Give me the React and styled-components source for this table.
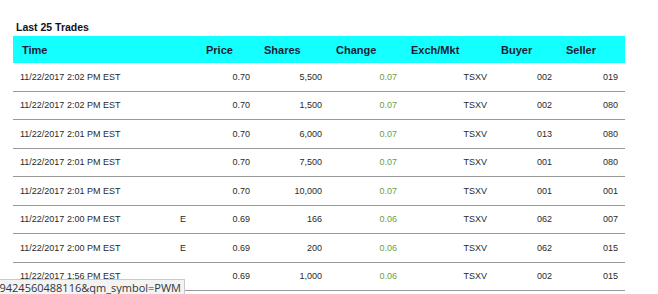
import React from 'react';
import styled, { createGlobalStyle } from 'styled-components';

const trades = [
  { time: '11/22/2017 2:02 PM EST', flag: '', price: '0.70', shares: '5,500', change: '0.07', mkt: 'TSXV', buyer: '002', seller: '019' },
  { time: '11/22/2017 2:02 PM EST', flag: '', price: '0.70', shares: '1,500', change: '0.07', mkt: 'TSXV', buyer: '002', seller: '080' },
  { time: '11/22/2017 2:01 PM EST', flag: '', price: '0.70', shares: '6,000', change: '0.07', mkt: 'TSXV', buyer: '013', seller: '080' },
  { time: '11/22/2017 2:01 PM EST', flag: '', price: '0.70', shares: '7,500', change: '0.07', mkt: 'TSXV', buyer: '001', seller: '080' },
  { time: '11/22/2017 2:01 PM EST', flag: '', price: '0.70', shares: '10,000', change: '0.07', mkt: 'TSXV', buyer: '001', seller: '001' },
  { time: '11/22/2017 2:00 PM EST', flag: 'E', price: '0.69', shares: '166', change: '0.06', mkt: 'TSXV', buyer: '062', seller: '007' },
  { time: '11/22/2017 2:00 PM EST', flag: 'E', price: '0.69', shares: '200', change: '0.06', mkt: 'TSXV', buyer: '062', seller: '015' },
  { time: '11/22/2017 1:56 PM EST', flag: '', price: '0.69', shares: '1,000', change: '0.06', mkt: 'TSXV', buyer: '002', seller: '015' },
];

const columns = [154, 32, 58, 72, 75, 90, 65, 66];

function App() {
  return (
    <Page>
      <GlobalStyle />
      <Title>Last 25 Trades</Title>
      <Table>
        <colgroup>
          {columns.map((w, i) => (
            <col key={i} style={{ width: w }} />
          ))}
        </colgroup>
        <thead>
          <tr>
            <Th>Time</Th>
            <Th />
            <Th>Price</Th>
            <Th>Shares</Th>
            <Th>Change</Th>
            <Th>Exch/Mkt</Th>
            <Th>Buyer</Th>
            <Th>Seller</Th>
          </tr>
        </thead>
        <tbody>
          {trades.map((t, i) => (
            <Row key={i}>
              <Td $align="left">{t.time}</Td>
              <Td $align="center">{t.flag}</Td>
              <Td>{t.price}</Td>
              <Td>{t.shares}</Td>
              <Td $up>{t.change}</Td>
              <Td>{t.mkt}</Td>
              <Td>{t.buyer}</Td>
              <Td>{t.seller}</Td>
            </Row>
          ))}
        </tbody>
      </Table>
      <StatusBubble>
        <span>9424560488116&amp;qm_symbol=PWM</span>
      </StatusBubble>
    </Page>
  );
}

export default App;

const GlobalStyle = createGlobalStyle`
  html, body {
    margin: 0;
    padding: 0;
    background: #ffffff;
  }
  body {
    font-family: "Liberation Sans", Arial, sans-serif;
  }
`;

const Page = styled.div`
  position: relative;
  width: 658px;
  height: 294px;
  overflow: hidden;
  padding: 20px 0 0 13px;
  box-sizing: border-box;
`;

const Title = styled.div`
  margin: 0 0 2px 3px;
  font-size: 10.5px;
  line-height: 14px;
  font-weight: 700;
  color: #111122;
`;

const Table = styled.table`
  width: 612px;
  table-layout: fixed;
  border-collapse: collapse;
`;

const Th = styled.th`
  height: 27px;
  padding: 0 7px;
  background: #14ffff;
  text-align: left;
  font-size: 11px;
  font-weight: 700;
  color: #1c1c33;
  vertical-align: middle;
  &:first-child {
    padding-left: 9px;
  }
`;

const Row = styled.tr`
  border-bottom: 1px solid #999999;
`;

const Td = styled.td`
  height: 27.5px;
  padding: 0 7px;
  font-size: 9px;
  color: ${(p) => (p.$up ? '#6a9e45' : '#2a2a2a')};
  text-align: ${(p) => p.$align || 'right'};
  vertical-align: middle;
  white-space: nowrap;
`;

const StatusBubble = styled.div`
  position: absolute;
  left: 0;
  bottom: 0;
  width: 185px;
  height: 15px;
  display: flex;
  justify-content: flex-end;
  align-items: center;
  overflow: hidden;
  padding-right: 3px;
  box-sizing: border-box;
  background: #f3f3f3;
  border-top: 1px solid #c9c9c9;
  border-right: 1px solid #c9c9c9;
  font-family: "Open Sans", "DejaVu Sans", sans-serif;
  font-size: 11px;
  color: #333333;
  white-space: nowrap;
  span {
    flex-shrink: 0;
  }
`;
